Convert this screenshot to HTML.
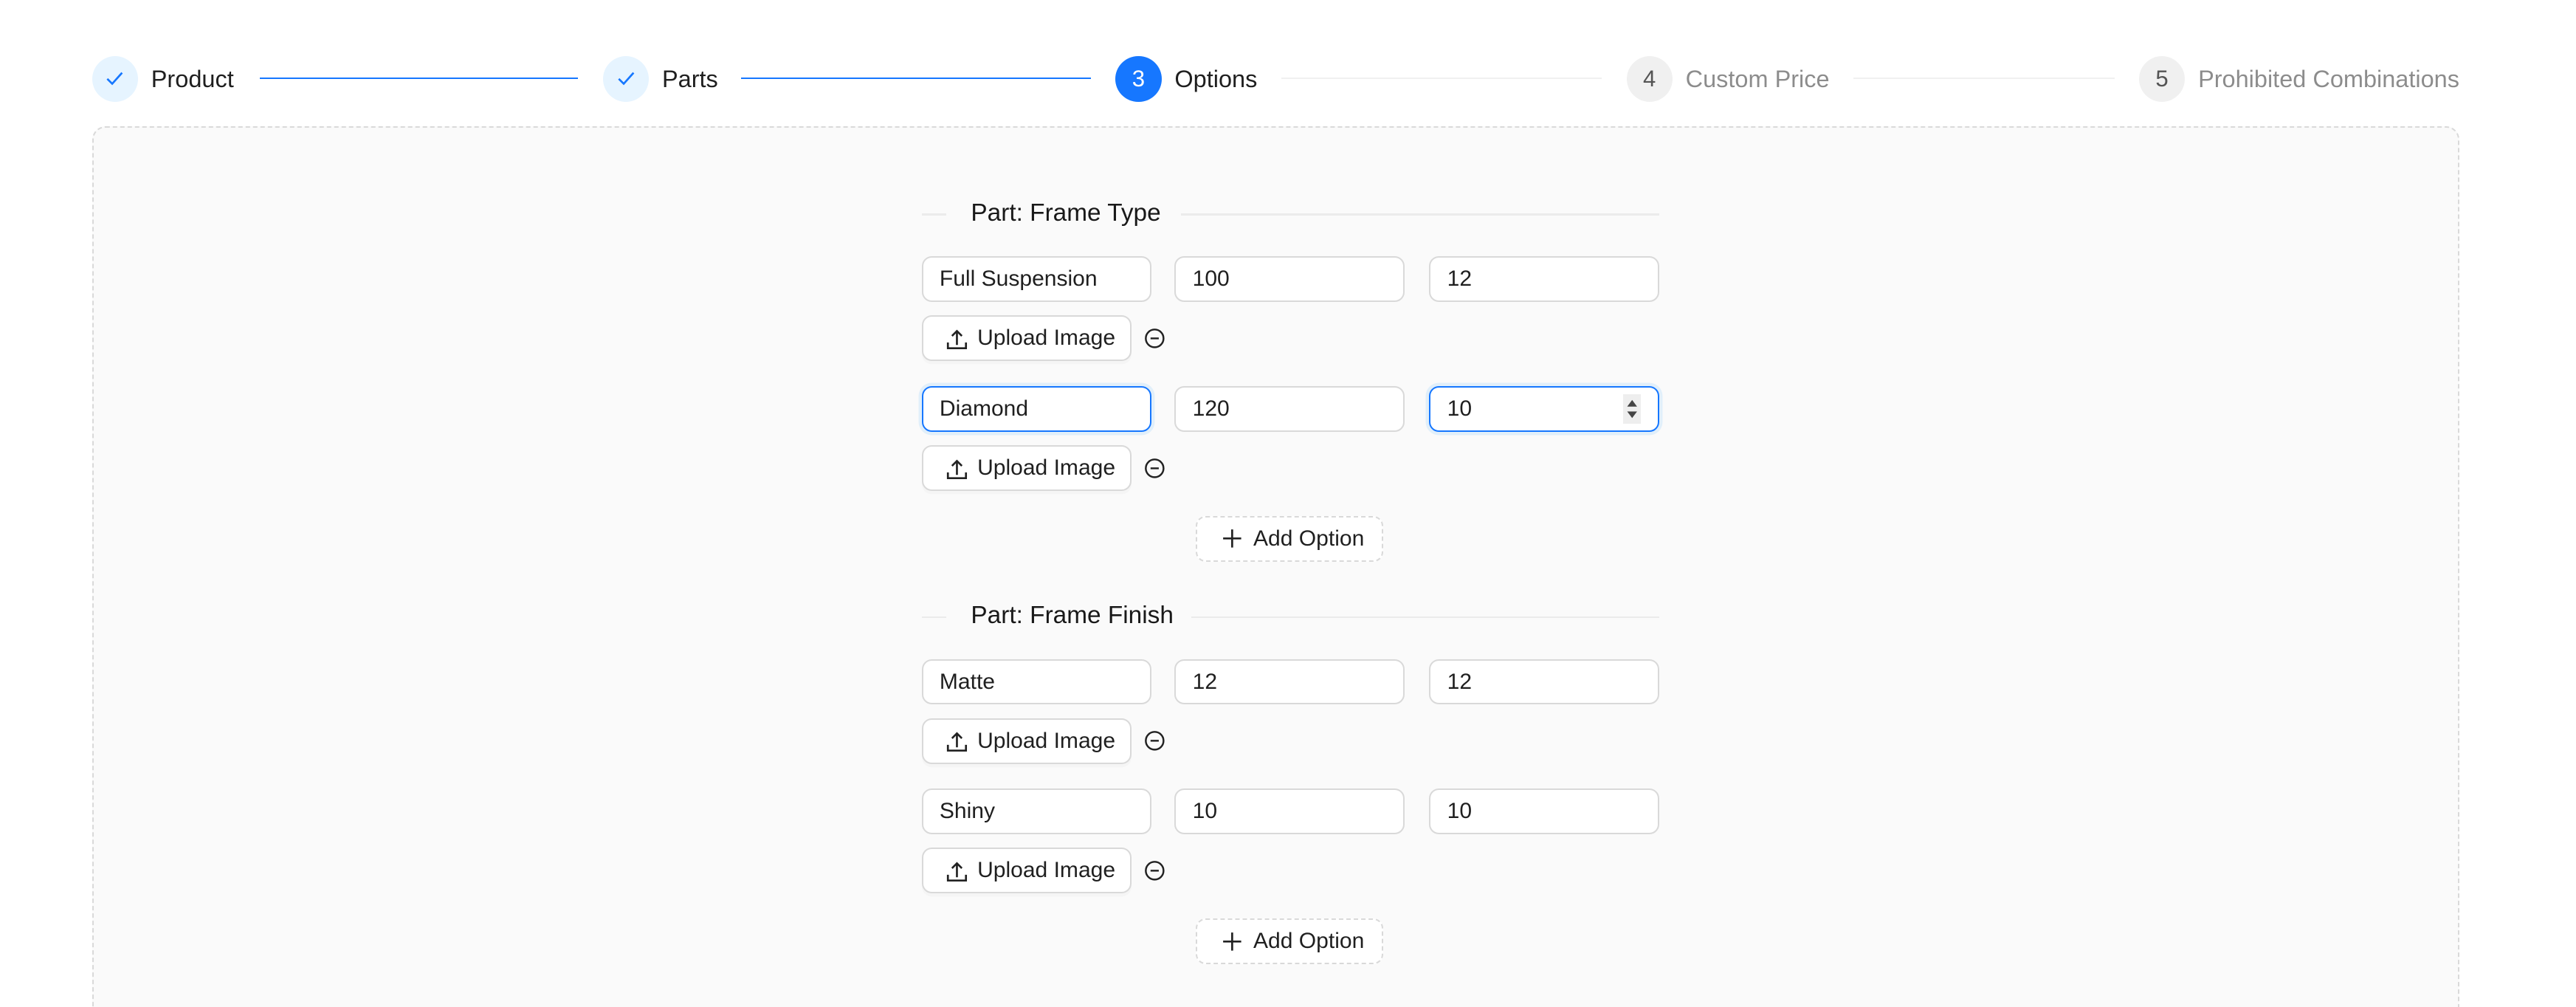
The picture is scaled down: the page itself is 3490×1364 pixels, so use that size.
<!DOCTYPE html>
<html><head><meta charset="utf-8"><style>
html{zoom:2.22576;height:613px;overflow:hidden}
body{margin:0;width:1568px;height:613px;overflow:hidden;background:#fff;font-family:"Liberation Sans",sans-serif;font-size:13.5px;color:rgba(0,0,0,.88);position:relative}
.c{position:absolute;width:28px;height:28px;border-radius:50%;top:34px;text-align:center;line-height:28px;font-size:14px}
.done{background:#e6f4ff;color:#1677ff}
.cur{background:#1677ff;color:#fff}
.wait{background:rgba(0,0,0,.06);color:rgba(0,0,0,.65)}
.t{position:absolute;top:38px;font-size:14.6px;line-height:20px}
.l{position:absolute;top:47px;height:1px}
.box{position:absolute;left:56px;top:77px;width:1439px;height:560px;border:1px dashed #d9d9d9;border-radius:8px;background:#fafafa}
.in{position:absolute;height:26px;border:1px solid #d9d9d9;border-radius:6px;background:#fff;line-height:26px;padding-left:10px;box-sizing:content-box;width:128px}
.in.f{border-color:#1677ff;box-shadow:0 0 0 2px rgba(5,145,255,.1)}
.up{position:absolute;left:561px;width:126px;height:26px;border:1px solid #d9d9d9;border-radius:6px;background:#fff;box-shadow:0 2px 0 rgba(0,0,0,.02);line-height:26px}
.up svg{position:absolute;left:14px;top:7px}
.up span{position:absolute;left:33px}
.mi{position:absolute;left:697px;width:12px;height:12px}
.add{position:absolute;left:728px;width:112px;height:26px;border:1px dashed #d9d9d9;border-radius:6px;background:#fff;line-height:26px}
.add span{position:absolute;left:34px}
.add svg{position:absolute;left:15px;top:7px}
.ti{position:absolute;left:591px;font-size:15px;line-height:20px;color:rgba(0,0,0,.9)}
.dv{position:absolute;height:1px;background:rgba(5,5,5,.06)}
</style></head><body>
<div class="c done" style="left:56px"><svg width="12" height="12" viewBox="0 0 12 12" style="margin-top:8px"><path d="M1.5 6.2l3 3 6-6.7" stroke="#1677ff" stroke-width="1.2" fill="none"/></svg></div>
<div class="t" style="left:92px">Product</div>
<div class="l" style="left:158px;width:194px;background:#1677ff"></div>
<div class="c done" style="left:367px"><svg width="12" height="12" viewBox="0 0 12 12" style="margin-top:8px"><path d="M1.5 6.2l3 3 6-6.7" stroke="#1677ff" stroke-width="1.2" fill="none"/></svg></div>
<div class="t" style="left:403px">Parts</div>
<div class="l" style="left:451px;width:213px;background:#1677ff"></div>
<div class="c cur" style="left:679px">3</div>
<div class="t" style="left:715px">Options</div>
<div class="l" style="left:780px;width:195px;background:rgba(5,5,5,.06)"></div>
<div class="c wait" style="left:990px">4</div>
<div class="t" style="left:1026px;color:rgba(0,0,0,.45)">Custom Price</div>
<div class="l" style="left:1128px;width:159px;background:rgba(5,5,5,.06)"></div>
<div class="c wait" style="left:1302px">5</div>
<div class="t" style="left:1338px;color:rgba(0,0,0,.45)">Prohibited Combinations</div>
<div class="box"></div>

<div class="dv" style="left:561px;width:15px;top:130px"></div><div class="ti" style="top:120px">Part: Frame Type</div><div class="dv" style="left:719px;width:291px;top:130px"></div>
<div class="in" style="left:561px;top:156px">Full Suspension</div><div class="in" style="left:715px;top:156px">100</div><div class="in" style="left:870px;top:156px">12</div>
<div class="up" style="top:192px"><svg width="13" height="13" viewBox="0 0 13 13"><path d="M6.5 10V1.5M3.5 4.5l3-3 3 3M1 8.5v3.5h11V8.5" stroke="#222" stroke-width="1.2" fill="none"/></svg><span>Upload Image</span></div>
<svg class="mi" style="top:200px" viewBox="0 0 12 12"><circle cx="6" cy="6" r="5.4" stroke="#222" stroke-width="1.1" fill="none"/><path d="M3.5 6h5" stroke="#222" stroke-width="1.1"/></svg>
<div class="in f" style="left:561px;top:235px">Diamond</div><div class="in" style="left:715px;top:235px">120</div><div class="in f" style="left:870px;top:235px">10<svg style="position:absolute;right:10px;top:4px" width="11" height="18" viewBox="0 0 11 18"><rect width="11" height="18" fill="#eee"/><path d="M2.5 7.5L5.5 3.5 8.5 7.5z M2.5 10.5L5.5 14.5 8.5 10.5z" fill="#444"/></svg></div>
<div class="up" style="top:271px"><svg width="13" height="13" viewBox="0 0 13 13"><path d="M6.5 10V1.5M3.5 4.5l3-3 3 3M1 8.5v3.5h11V8.5" stroke="#222" stroke-width="1.2" fill="none"/></svg><span>Upload Image</span></div>
<svg class="mi" style="top:279px" viewBox="0 0 12 12"><circle cx="6" cy="6" r="5.4" stroke="#222" stroke-width="1.1" fill="none"/><path d="M3.5 6h5" stroke="#222" stroke-width="1.1"/></svg>
<div class="add" style="top:314px"><svg width="12" height="12" viewBox="0 0 12 12"><path d="M6 0.5v11M0.5 6h11" stroke="#222" stroke-width="1.2"/></svg><span>Add Option</span></div>

<div class="dv" style="left:561px;width:15px;top:375px"></div><div class="ti" style="top:365px">Part: Frame Finish</div><div class="dv" style="left:725px;width:285px;top:375px"></div>
<div class="in" style="left:561px;top:401px">Matte</div><div class="in" style="left:715px;top:401px">12</div><div class="in" style="left:870px;top:401px">12</div>
<div class="up" style="top:437px"><svg width="13" height="13" viewBox="0 0 13 13"><path d="M6.5 10V1.5M3.5 4.5l3-3 3 3M1 8.5v3.5h11V8.5" stroke="#222" stroke-width="1.2" fill="none"/></svg><span>Upload Image</span></div>
<svg class="mi" style="top:445px" viewBox="0 0 12 12"><circle cx="6" cy="6" r="5.4" stroke="#222" stroke-width="1.1" fill="none"/><path d="M3.5 6h5" stroke="#222" stroke-width="1.1"/></svg>
<div class="in" style="left:561px;top:480px">Shiny</div><div class="in" style="left:715px;top:480px">10</div><div class="in" style="left:870px;top:480px">10</div>
<div class="up" style="top:516px"><svg width="13" height="13" viewBox="0 0 13 13"><path d="M6.5 10V1.5M3.5 4.5l3-3 3 3M1 8.5v3.5h11V8.5" stroke="#222" stroke-width="1.2" fill="none"/></svg><span>Upload Image</span></div>
<svg class="mi" style="top:524px" viewBox="0 0 12 12"><circle cx="6" cy="6" r="5.4" stroke="#222" stroke-width="1.1" fill="none"/><path d="M3.5 6h5" stroke="#222" stroke-width="1.1"/></svg>
<div class="add" style="top:559px"><svg width="12" height="12" viewBox="0 0 12 12"><path d="M6 0.5v11M0.5 6h11" stroke="#222" stroke-width="1.2"/></svg><span>Add Option</span></div>
</body></html>
